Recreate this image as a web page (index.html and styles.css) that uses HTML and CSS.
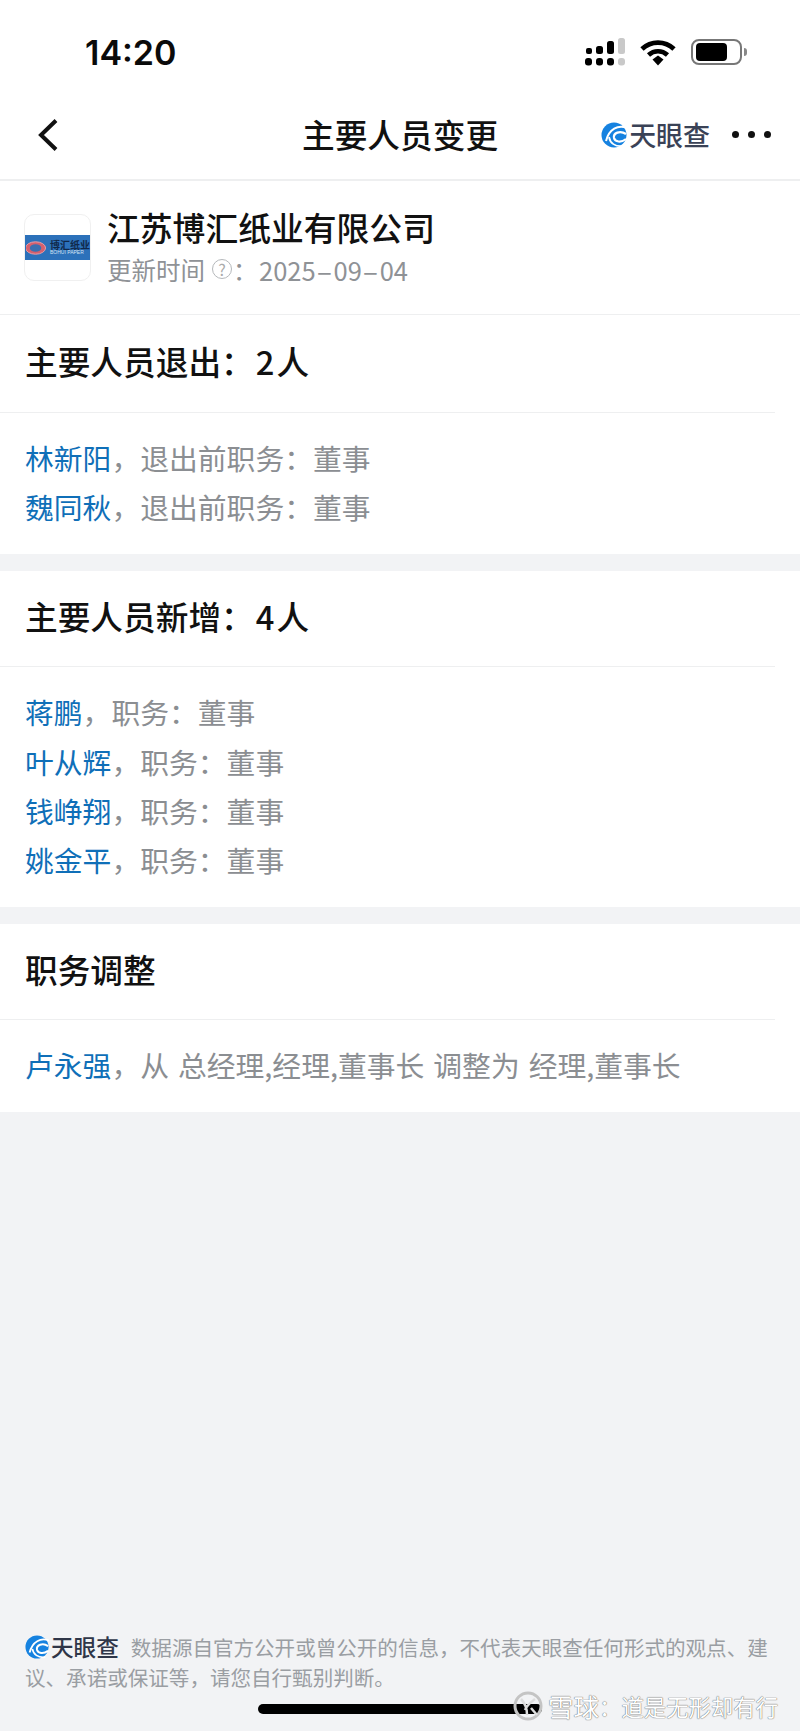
FILE: index.html
```html
<!DOCTYPE html>
<html lang="zh-CN">
<head>
  <meta charset="UTF-8">
  <meta name="viewport" content="width=device-width, initial-scale=1.0">
  <title>主要人员变更</title>
  <link rel="stylesheet" href="styles.css">
</head>
<body>
  <div class="page">
    <div class="status-bar">
      <span class="time">14:20</span>
      <div class="status-icons">
        <svg class="signal" width="40" height="28" viewBox="0 0 40 28">
          <rect x="1" y="10" width="6" height="6" rx="2" fill="#000"/>
          <rect x="11" y="8" width="7" height="8" rx="2.5" fill="#000"/>
          <rect x="22" y="3" width="7" height="13" rx="2.5" fill="#000"/>
          <rect x="33" y="0" width="7" height="16" rx="2.5" fill="#c9c9c9"/>
          <rect x="0" y="20" width="7" height="7.5" rx="3" fill="#000"/>
          <rect x="11" y="20" width="7" height="7.5" rx="3" fill="#000"/>
          <rect x="22" y="20" width="7" height="7.5" rx="3" fill="#000"/>
          <rect x="33" y="20" width="7" height="7.5" rx="3" fill="#c9c9c9"/>
        </svg>
        <svg class="wifi" width="36" height="27" viewBox="0 0 36 27">
          <path d="M2 10C11 1.5 25 1.5 34 10" fill="none" stroke="#000" stroke-width="4.8"/>
          <path d="M8.5 16C14 11 22 11 27.5 16" fill="none" stroke="#000" stroke-width="4.6"/>
          <path d="M12.5 20.5L18 16.5L23.5 20.5L18 26.5Z" fill="#000"/>
        </svg>
        <div class="battery">
          <div class="battery-body"><div class="battery-fill"></div></div>
          <div class="battery-cap"></div>
        </div>
      </div>
    </div>

    <div class="nav-bar">
      <svg class="back" width="24" height="34" viewBox="0 0 24 34">
        <path d="M20 2.5L5 17L20 31.5" fill="none" stroke="#111" stroke-width="4"/>
      </svg>
      <h1 class="nav-title">主要人员变更</h1>
      <div class="brand nav-brand">
        <svg class="brand-mark" width="26" height="26" viewBox="0 0 26 26">
          <circle cx="13" cy="13" r="12.5" fill="#1682e0"/>
          <path d="M26 6C17 2.5 8 7 5 19" fill="none" stroke="#fff" stroke-width="2"/>
          <path d="M25 12C19 8 12 11 13 16C14 20 20 21 25 17" fill="none" stroke="#fff" stroke-width="2.2"/>
          <path d="M8 15C9 21 14 25 22 24" fill="none" stroke="#fff" stroke-width="1.8"/>
        </svg>
        <span class="brand-name">天眼查</span>
      </div>
      <div class="more"><i></i><i></i><i></i></div>
    </div>

    <div class="company">
      <div class="company-logo">
        <div class="logo-band">
          <svg width="22" height="16" viewBox="0 0 22 16">
            <ellipse cx="10" cy="8" rx="10.5" ry="6.5" fill="#d4606e" stroke="#e8a0a8" stroke-width="1"/>
            <ellipse cx="10" cy="8" rx="6" ry="4" fill="#3b6fb0"/>
          </svg>
          <div class="logo-words">
            <span class="logo-cn">博汇纸业</span>
            <span class="logo-en">BOHUI PAPER</span>
          </div>
        </div>
      </div>
      <div class="company-info">
        <div class="company-name">江苏博汇纸业有限公司</div>
        <div class="company-date">
          <span>更新时间</span>
          <span class="help">?</span>
          <span class="date-colon">：</span>
          <span class="date-value">2025<span class="dash">-</span>09<span class="dash">-</span>04</span>
        </div>
      </div>
    </div>

    <section class="card card-first">
      <h2 class="card-title">主要人员退出：<span class="num">2</span>人</h2>
      <div class="rows">
        <p class="row"><a class="name">林新阳</a>，<span class="gap"></span>退出前职务：董事</p>
        <p class="row"><a class="name">魏同秋</a>，<span class="gap"></span>退出前职务：董事</p>
      </div>
    </section>

    <section class="card">
      <h2 class="card-title">主要人员新增：<span class="num">4</span>人</h2>
      <div class="rows">
        <p class="row"><a class="name">蒋鹏</a>，<span class="gap"></span>职务：董事</p>
        <p class="row"><a class="name">叶从辉</a>，<span class="gap"></span>职务：董事</p>
        <p class="row"><a class="name">钱峥翔</a>，<span class="gap"></span>职务：董事</p>
        <p class="row"><a class="name">姚金平</a>，<span class="gap"></span>职务：董事</p>
      </div>
    </section>

    <section class="card">
      <h2 class="card-title">职务调整</h2>
      <div class="rows">
        <p class="row row-spaced"><a class="name">卢永强</a>，<span class="gap"></span>从 总经理,经理,董事长 调整为 经理,董事长</p>
      </div>
    </section>

    <footer class="footer">
      <div class="brand footer-brand">
        <svg class="brand-mark" width="24" height="24" viewBox="0 0 26 26">
          <circle cx="13" cy="13" r="12.5" fill="#1682e0"/>
          <path d="M26 6C17 2.5 8 7 5 19" fill="none" stroke="#fff" stroke-width="2"/>
          <path d="M25 12C19 8 12 11 13 16C14 20 20 21 25 17" fill="none" stroke="#fff" stroke-width="2.2"/>
          <path d="M8 15C9 21 14 25 22 24" fill="none" stroke="#fff" stroke-width="1.8"/>
        </svg>
        <span class="brand-name">天眼查</span>
      </div>数据源自官方公开或曾公开的信息，不代表天眼查任何形式的观点、建议、承诺或保证等，请您自行甄别判断。
    </footer>

    <div class="home-bar"></div>
    <div class="watermark">
      <svg width="30" height="30" viewBox="0 0 30 30">
        <circle cx="15" cy="15" r="13" fill="none" stroke="#c4c4c4" stroke-width="3"/>
        <path d="M8 8C12 12 14 17 14 24M22 8C17 12 14 14 12 19M18 17L24 24" fill="none" stroke="#ddd" stroke-width="2.5"/>
      </svg>
      <span class="wm-brand">雪球</span><span class="wm-user">：道是无形却有行</span>
    </div>
  </div>
</body>
</html>
```

FILE: styles.css
```css
* {
  box-sizing: border-box;
}

body {
  margin: 0;
  background: #f2f3f5;
  font-family: "Noto Sans CJK SC", "Liberation Sans", sans-serif;
}

h1, h2, p {
  margin: 0;
}

.page {
  position: relative;
  display: flex;
  flex-direction: column;
  height: 1731px;
  overflow: hidden;
}

/* status bar */
.status-bar {
  display: flex;
  align-items: center;
  justify-content: space-between;
  height: 90px;
  padding: 14px 53px 0 85px;
  background: #fff;
}

.time {
  font-family: Inter, "Liberation Sans", sans-serif;
  font-size: 34px;
  font-weight: 600;
  color: #0a0a0a;
}

.status-icons {
  display: flex;
  align-items: center;
  gap: 15px;
}

.battery {
  display: flex;
  align-items: center;
  gap: 2px;
}

.battery-body {
  width: 51px;
  height: 26px;
  padding: 2px 3px;
  border: 2px solid #777;
  border-radius: 8px;
}

.battery-fill {
  width: 31px;
  height: 100%;
  background: #000;
  border-radius: 4px;
}

.battery-cap {
  width: 3px;
  height: 8px;
  background: #888;
  border-radius: 0 3px 3px 0;
}

/* nav */
.nav-bar {
  display: flex;
  align-items: center;
  height: 91px;
  padding: 0 15px 0 36px;
  background: #fff;
  border-bottom: 2px solid #eeeff0;
}

.nav-title {
  margin-left: 242px;
  margin-bottom: 2px;
  font-size: 32.7px;
  font-weight: 500;
  line-height: 44px;
  color: #111;
  white-space: nowrap;
}

.brand {
  display: flex;
  align-items: center;
}

.nav-brand {
  margin-left: 103px;
  gap: 2px;
}

.brand-name {
  font-weight: 500;
  color: #3a4256;
  white-space: nowrap;
}

.nav-brand .brand-name {
  font-size: 27px;
  line-height: 30px;
}

.more {
  display: flex;
  gap: 9px;
  margin-left: 22px;
}

.more i {
  width: 7px;
  height: 7px;
  background: #111;
  border-radius: 50%;
}

/* company */
.company {
  display: flex;
  align-items: center;
  height: 134px;
  padding: 0 24px;
  background: #fff;
  border-bottom: 1px solid #eeeff0;
}

.company-logo {
  display: flex;
  align-items: center;
  flex-shrink: 0;
  width: 67px;
  height: 67px;
  border: 1px solid #f0f0f0;
  border-radius: 10px;
}

.logo-band {
  display: flex;
  align-items: center;
  gap: 3px;
  width: 100%;
  height: 25px;
  padding-left: 1px;
  background: #2c71ba;
  overflow: hidden;
}

.logo-words {
  display: flex;
  flex-direction: column;
  line-height: 1;
}

.logo-cn {
  font-size: 10px;
  font-weight: 700;
  color: #10284a;
  white-space: nowrap;
}

.logo-en {
  font-family: "Liberation Sans", sans-serif;
  font-size: 5px;
  color: #d5e3f2;
  white-space: nowrap;
}

.company-info {
  margin-left: 16px;
  margin-top: -1px;
}

.company-name {
  font-size: 32.8px;
  font-weight: 500;
  line-height: 44px;
  color: #111;
  white-space: nowrap;
}

.company-date {
  display: flex;
  align-items: center;
  height: 40px;
  font-size: 24.5px;
  color: #8f9296;
}

.help {
  display: flex;
  align-items: center;
  justify-content: center;
  width: 20px;
  height: 20px;
  margin-left: 7px;
  font-size: 16px;
  border: 1px solid #b5b8bb;
  border-radius: 50%;
  color: #aaa;
}

.date-colon {
  width: 24px;
  margin-left: 1px;
}

.date-value {
  margin-left: 2px;
  font-size: 25.5px;
}

.dash {
  display: inline-block;
  margin: 0 4.5px;
  transform: scaleX(1.9);
}

/* cards */
.card {
  margin-bottom: 17px;
  background: #fff;
}

.card-title {
  height: 96px;
  margin-right: 25px;
  padding-left: 25px;
  font-size: 32.7px;
  font-weight: 500;
  line-height: 90px;
  color: #111;
  border-bottom: 1px solid #eeeff0;
}

.card-first .card-title {
  height: 98px;
  line-height: 92px;
}

.num {
  margin-left: 2px;
  margin-right: 2px;
}

.rows {
  display: flex;
  flex-direction: column;
  gap: 9.3px;
  padding: 25px 25px 27px;
}

.row {
  height: 40px;
  font-size: 28.8px;
  line-height: 40px;
  color: #8b8e92;
  white-space: nowrap;
}

.row-spaced {
  word-spacing: 2.5px;
}

.name {
  color: #0f6fb8;
}

/* footer */
.footer {
  height: 99px;
  margin-top: auto;
  padding: 0 24px 0 25px;
  font-size: 20.55px;
  line-height: 30px;
  color: #9a9ea3;
}

.footer-brand {
  display: inline-flex;
  gap: 2px;
  margin-right: 12px;
  vertical-align: top;
}

.footer-brand .brand-name {
  font-size: 22.6px;
  line-height: 30px;
  color: #2f3648;
}

.home-bar {
  position: absolute;
  left: 258px;
  bottom: 17px;
  width: 284px;
  height: 10px;
  background: #000;
  border-radius: 5px;
}

.watermark {
  position: absolute;
  left: 513px;
  top: 1691px;
  display: flex;
  align-items: center;
  line-height: 30px;
  color: #fff;
  text-shadow: 0 0 1px #666, 0 0 1px #666;
  white-space: nowrap;
}

.wm-brand {
  margin-left: 5px;
  font-size: 25.5px;
}

.wm-user {
  font-size: 22.4px;
}
```
